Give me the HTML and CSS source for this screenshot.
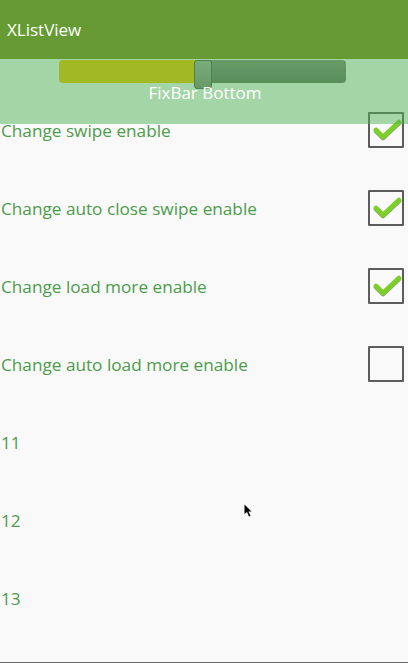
FILE: index.html
```html
<!DOCTYPE html>
<html>
<head>
<meta charset="utf-8">
<link rel="stylesheet" href="styles.css">
</head>
<body>
<div class="app">
  <header class="bar">XListView</header>
  <main class="list">
    <div class="row"><span>Change swipe enable</span><span class="cb on"><svg viewBox="0 0 36 36"><path d="M8 18 L15 25 L31 10" /></svg></span></div>
    <div class="row"><span>Change auto close swipe enable</span><span class="cb on"><svg viewBox="0 0 36 36"><path d="M8 18 L15 25 L31 10" /></svg></span></div>
    <div class="row"><span>Change load more enable</span><span class="cb on"><svg viewBox="0 0 36 36"><path d="M8 18 L15 25 L31 10" /></svg></span></div>
    <div class="row"><span>Change auto load more enable</span><span class="cb"></span></div>
    <div class="row"><span>11</span></div>
    <div class="row"><span>12</span></div>
    <div class="row"><span>13</span></div>
  </main>
  <div class="fixbar">
    <div class="track"><div class="fill"></div><div class="rest"></div><div class="thumb"></div></div>
    <div class="fixlabel">FixBar Bottom</div>
  </div>
  <svg class="cursor" width="9" height="14" viewBox="0 0 9 14"><path d="M0.5 0.5 L0.5 10 L3 8 L5 12.5 L6.5 12 L4.5 7.5 L7.5 7.5 Z" fill="#000"/></svg>
</div>
</body>
</html>
```
FILE: styles.css
```css
html, body {
  margin: 0;
  padding: 0;
}
body {
  font-family: "Open Sans", "Noto Sans", sans-serif;
  background: #f9f9f9;
  overflow: hidden;
}
.app {
  position: relative;
  width: 408px;
  height: 663px;
  display: flex;
  flex-direction: column;
}
.bar {
  height: 59px;
  flex: none;
  background: #669a33;
  color: #fff;
  font-size: 17px;
  display: flex;
  align-items: center;
  padding-left: 7px;
  box-sizing: border-box;
}
.list {
  flex: 1;
  padding-top: 32px;
  border-bottom: 1px solid #6a6a6a;
  overflow: hidden;
}
.row {
  height: 78px;
  display: flex;
  align-items: center;
  justify-content: space-between;
  padding: 0 4px 0 1px;
  color: #4c9c4c;
  font-size: 17.2px;
}
.cb {
  width: 36px;
  height: 36px;
  box-sizing: border-box;
  border: 2px solid #5c5c5c;
  border-radius: 1px;
  background: #fafafa;
  position: relative;
}
.cb svg {
  position: absolute;
  left: -2px;
  top: -2px;
  width: 36px;
  height: 36px;
}
.cb path {
  fill: none;
  stroke: #7ccf26;
  stroke-width: 4.6;
  stroke-linecap: round;
  stroke-linejoin: round;
  filter: drop-shadow(0 1px 0.6px rgba(60,110,20,0.6));
}
.fixbar {
  position: absolute;
  left: 0;
  right: 0;
  top: 59px;
  height: 65px;
  background: rgba(80, 178, 84, 0.5);
}
.track {
  position: absolute;
  left: 59px;
  top: 1px;
  width: 287px;
  height: 23px;
  display: flex;
  border-radius: 4px;
}
.fill {
  width: 140px;
  background: #a2b925;
  border-radius: 4px 0 0 4px;
}
.rest {
  flex: 1;
  background: linear-gradient(#679b68, #5a8d5c);
  border-radius: 0 4px 4px 0;
}
.thumb {
  position: absolute;
  left: 135px;
  top: 0;
  width: 18px;
  height: 29px;
  box-sizing: border-box;
  background: linear-gradient(#7aab7a, #689a68);
  border: 1px solid #4f7f55;
  border-radius: 3px;
}
.fixlabel {
  position: absolute;
  left: 0;
  right: 0;
  top: 22px;
  text-align: center;
  color: #fff;
  font-size: 17px;
  padding-left: 2px;
}
.cursor {
  position: absolute;
  left: 244px;
  top: 504px;
}
```
